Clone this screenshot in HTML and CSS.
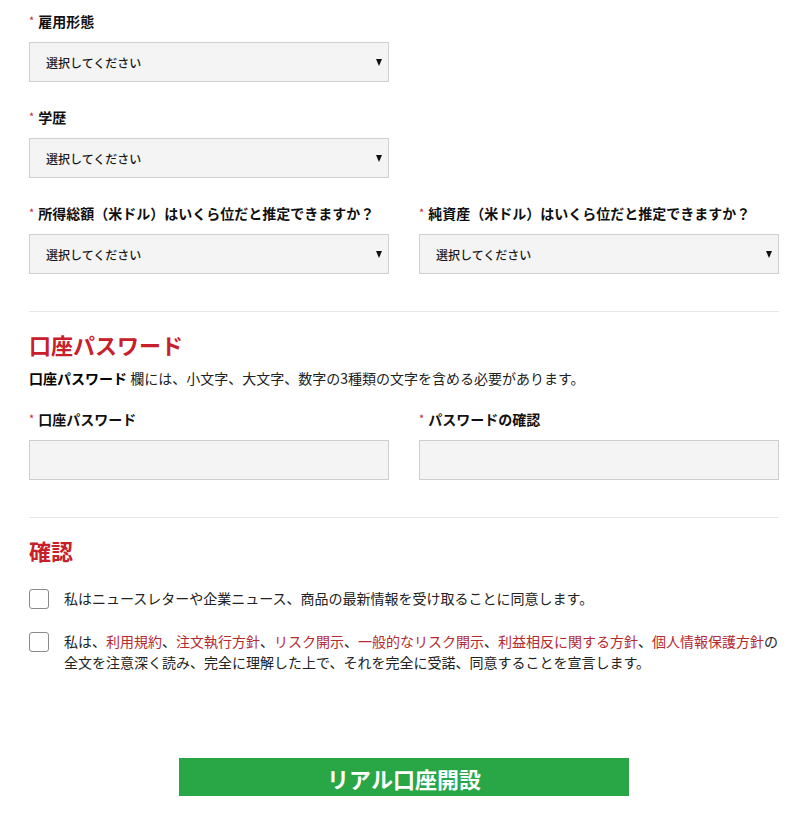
FILE: index.html
```html
<!doctype html>
<html lang="ja">
<head>
    <meta charset="utf-8">
    <meta name="viewport" content="width=device-width">
    <title>リアル口座開設</title>
    <link rel="stylesheet" href="styles.css">
</head>
<body>

<form class="account-form">
    <div class="field field-half">
        <label class="field-label"><span class="req">*</span>雇用形態</label>
        <div class="select"><select><option>選択してください</option></select></div>
    </div>

    <div class="field field-half">
        <label class="field-label"><span class="req">*</span>学歴</label>
        <div class="select"><select><option>選択してください</option></select></div>
    </div>

    <div class="row">
        <div class="field">
            <label class="field-label"><span class="req">*</span>所得総額（米ドル）はいくら位だと推定できますか？</label>
            <div class="select"><select><option>選択してください</option></select></div>
        </div>
        <div class="field">
            <label class="field-label"><span class="req">*</span>純資産（米ドル）はいくら位だと推定できますか？</label>
            <div class="select"><select><option>選択してください</option></select></div>
        </div>
    </div>

    <hr class="divider">

    <h2 class="section-title">口座パスワード</h2>
    <p class="hint"><strong>口座パスワード</strong> 欄には、小文字、大文字、数字の3種類の文字を含める必要があります。</p>

    <div class="row">
        <div class="field">
            <label class="field-label"><span class="req">*</span>口座パスワード</label>
            <input class="text-input" type="password">
        </div>
        <div class="field">
            <label class="field-label"><span class="req">*</span>パスワードの確認</label>
            <input class="text-input" type="password">
        </div>
    </div>

    <hr class="divider">

    <h2 class="section-title">確認</h2>

    <label class="check">
        <input type="checkbox">
        <span class="check-box"></span>
        <span class="check-text">私はニュースレターや企業ニュース、商品の最新情報を受け取ることに同意します。</span>
    </label>

    <label class="check">
        <input type="checkbox">
        <span class="check-box"></span>
        <span class="check-text">私は、<a href="#">利用規約</a>、<a href="#">注文執行方針</a>、<a href="#">リスク開示</a>、<a href="#">一般的なリスク開示</a>、<a href="#">利益相反に関する方針</a>、<a href="#">個人情報保護方針</a>の全文を注意深く読み、完全に理解した上で、それを完全に受諾、同意することを宣言します。</span>
    </label>

    <div class="submit-wrap">
        <button type="button" class="submit">リアル口座開設</button>
    </div>
</form>

</body>
</html>
```

FILE: styles.css
```css
html, body {
    margin: 0;
    padding: 0;
    color: #222;
    background: #fff;
    font-family: "Noto Sans CJK JP", "Noto Sans", sans-serif;
}

.account-form {
    width: 750px;
    padding: 10px 0 40px 29px;
}

.row {
    display: grid;
    grid-template-columns: 360px 360px;
    column-gap: 30px;
}

.field {
    margin-bottom: 24px;
}
    .field-half {
        width: 360px;
    }
    .field-label {
        display: block;
        height: 20px;
        margin-bottom: 12px;
        font-size: 14px;
        line-height: 20px;
        font-weight: bold;
        color: #111;
        white-space: nowrap;
    }
        .req {
            color: #c8232c;
            font-size: 11px;
            font-weight: normal;
            margin-right: 4px;
            vertical-align: 2px;
        }

.select {
    position: relative;
}
    .select select {
        display: block;
        width: 100%;
        height: 40px;
        margin: 0;
        padding: 0 28px 0 16px;
        border: 1px solid #cfcfcf;
        border-radius: 0;
        background: #f4f4f4;
        color: #1a1a1a;
        font-family: inherit;
        font-size: 12px;
        font-weight: 500;
        -webkit-appearance: none;
        appearance: none;
    }
    .select::after {
        content: "";
        position: absolute;
        right: 7px;
        top: 17px;
        width: 0;
        height: 0;
        border-left: 3px solid transparent;
        border-right: 3px solid transparent;
        border-top: 7px solid #111;
        pointer-events: none;
    }

.text-input {
    display: block;
    box-sizing: border-box;
    width: 100%;
    height: 40px;
    margin: 0;
    border: 1px solid #cfcfcf;
    background: #f4f4f4;
}

.divider {
    margin: 13px 0 0;
    border: 0;
    border-top: 1px solid #e6e6e6;
}

.section-title {
    margin: 17px 0 0;
    font-size: 22px;
    line-height: 30px;
    font-weight: bold;
    color: #c8202a;
}

.hint {
    margin: 9px 0 20px;
    font-size: 14px;
    line-height: 20px;
}
    .hint strong {
        color: #000;
    }

.check {
    display: flex;
    align-items: flex-start;
    margin-top: 23px;
    cursor: pointer;
}
    .check + .check {
        margin-top: 22px;
    }
    .check input {
        display: none;
    }
    .check-box {
        flex: none;
        box-sizing: border-box;
        width: 20px;
        height: 20px;
        margin: 1px 15px 0 0;
        border: 1px solid #8a8a8a;
        border-radius: 3px;
        background: #fff;
    }
    .check-text {
        font-size: 14px;
        line-height: 21px;
        color: #222;
    }
        .check-text a {
            color: #b42a2f;
            text-decoration: none;
        }

.submit-wrap {
    display: flex;
    justify-content: center;
    margin-top: 85px;
}
    .submit {
        width: 450px;
        height: 38px;
        border: 0;
        background: #29a645;
        color: #fff;
        font-family: inherit;
        font-size: 22px;
        font-weight: bold;
        line-height: 38px;
        cursor: pointer;
    }
```
